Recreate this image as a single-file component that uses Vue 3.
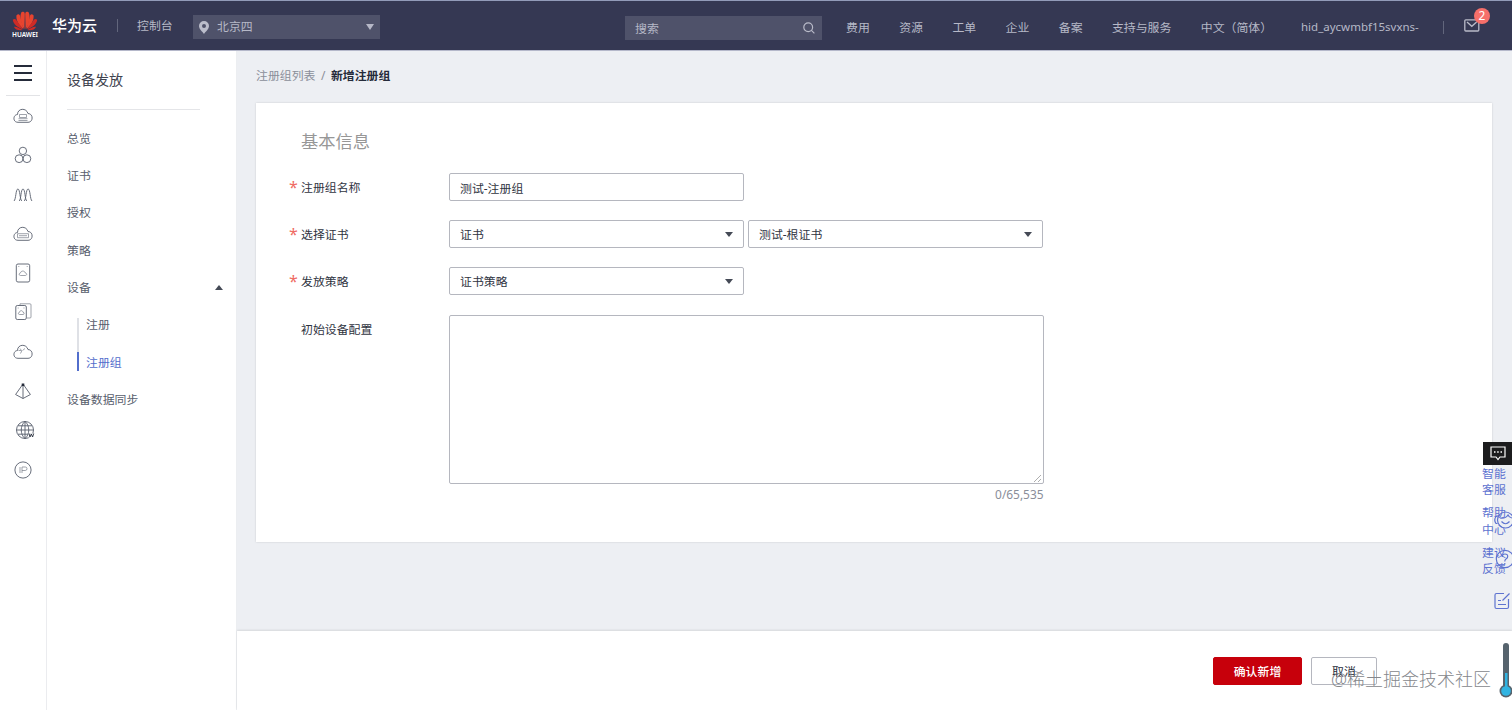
<template>
  <div class="page">
    <header class="header">
      <div class="logo">
        <svg width="26" height="20" viewBox="0 0 26 20">
          <g fill="#e8442f">
            <path d="M12.400 18C8.600 13 7.300 5.200 9.400 1.200 12 .2 12.800 1 12.800 3.500z" />
            <path d="M13.600 18C17.400 13 18.700 5.200 16.600 1.200 14 .2 13.200 1 13.200 3.500z" />
            <path d="M11.600 18C7 14.500 3.700 9 4.500 4.200 6.600 2.200 8 3.400 8.300 6z" />
            <path d="M14.400 18C19 14.500 22.300 9 21.500 4.200 19.400 2.200 18 3.400 17.700 6z" />
          </g>
          <g fill="#cf2b26">
            <path d="M11 18.300C6 17 1.400 13.300.8 8.800 2.500 7.200 4 8.200 5 10z" />
            <path d="M15 18.300C20 17 24.600 13.300 25.200 8.800 23.500 7.200 22 8.200 21 10z" />
            <path d="M10.700 19C7 19.800 3.200 19 1.900 15.800 4 15 8 17.500 10.700 19z" />
            <path d="M15.300 19C19 19.800 22.800 19 24.100 15.800 22 15 18 17.500 15.300 19z" />
          </g>
        </svg>
        <span>HUAWEI</span>
      </div>
      <strong class="brand">华为云</strong>
      <i class="divider"></i>
      <a class="console">控制台</a>
      <div class="region">
        <svg width="10" height="13" viewBox="0 0 10 13">
          <path fill="#bbbdcb" fill-rule="evenodd" d="M5 0a5 5 0 0 1 5 5c0 3-3.300 5.500-5 8-1.700-2.500-5-5-5-8a5 5 0 0 1 5-5zm0 3a2 2 0 1 0 0 4 2 2 0 0 0 0-4z" />
        </svg>
        <span>北京四</span>
        <i class="caret"></i>
      </div>
      <div class="search">
        <span>搜索</span>
        <svg width="12" height="12" viewBox="0 0 12 12" fill="none" stroke="#b9bbc9" stroke-width="1.200">
          <circle cx="5.200" cy="5.200" r="4.400" />
          <path d="M8.400 8.400l3 3" />
        </svg>
      </div>
      <nav class="top-nav">
        <a v-for="item in topNav" :key="item">{{ item }}</a>
      </nav>
      <span class="user">hid_aycwmbf15svxns-</span>
      <i class="divider mail-divider"></i>
      <div class="mail">
        <svg width="16" height="13" viewBox="0 0 16 13" fill="none" stroke="#b9bbc9" stroke-width="1.300">
          <rect x=".8" y=".8" width="14" height="11.200" rx="1" />
          <path d="M3 3l4.800 4.300L12.600 3" />
        </svg>
        <span class="badge">2</span>
      </div>
    </header>

    <div class="body">
      <aside class="rail">
        <div class="burger"><i></i><i></i><i></i></div>
        <div class="rail-icons">
          <svg v-for="(icon, i) in railIcons" :key="i" :class="{ shifted: i === 8 }" width="20" height="20" viewBox="0 0 20 20">
            <path v-for="(p, j) in icon" :key="j" :d="p.d" :class="p.c" />
          </svg>
        </div>
      </aside>

      <aside class="sidebar">
        <h2>设备发放</h2>
        <ul class="menu">
          <li v-for="item in menu" :key="item">{{ item }}</li>
          <li class="parent">设备<i class="caret up"></i></li>
          <li class="sub">注册</li>
          <li class="sub active">注册组</li>
          <li>设备数据同步</li>
        </ul>
      </aside>

      <main class="main">
        <div class="content">
          <div class="breadcrumb">
            <a>注册组列表</a><span class="slash">/</span><b>新增注册组</b>
          </div>
          <section class="card">
            <h3>基本信息</h3>
            <div class="row">
              <label class="required">注册组名称</label>
              <input v-model="form.name" class="control" type="text" />
            </div>
            <div class="row">
              <label class="required">选择证书</label>
              <div class="control select">{{ form.type }}<i class="caret"></i></div>
              <div class="control select second">{{ form.cert }}<i class="caret"></i></div>
            </div>
            <div class="row">
              <label class="required">发放策略</label>
              <div class="control select">{{ form.policy }}<i class="caret"></i></div>
            </div>
            <div class="row">
              <label>初始设备配置</label>
              <div class="config">
                <textarea v-model="form.config"></textarea>
                <svg class="grip" width="9" height="9" viewBox="0 0 9 9" stroke="#999" stroke-width=".8"><path d="M1 8l7-7M5 8l3-3" /></svg>
                <div class="count">{{ form.config.length }}/65,535</div>
              </div>
            </div>
          </section>
        </div>
        <footer class="footer">
          <button class="btn primary">确认新增</button>
          <button class="btn">取消</button>
        </footer>
      </main>
    </div>

    <div class="helper">
      <div class="chat">
        <svg width="16" height="15" viewBox="0 0 16 15" fill="none" stroke="#fff" stroke-width="1.200">
          <path d="M1 1h14v10H10l-2 2.500L6 11H1z" />
          <path d="M4 6h1.500M7.200 6h1.500M10.500 6H12" stroke-width="1.600" />
        </svg>
      </div>
      <p v-for="tip in helpTips" :key="tip[0]">{{ tip[0] }}<br />{{ tip[1] }}</p>
      <svg class="helper-icons" width="20" height="104" viewBox="0 0 20 104" fill="none" stroke="#5e73d0" stroke-width="1.200">
        <circle cx="13.500" cy="13" r="8" />
        <path d="M8 11q5.500 1 8-3 1 2.500 4 3M5.500 9.500H4q-2.500 3.500 0 7h1.500M9.500 14.500q4 4.500 8 0" />
        <circle cx="13" cy="52" r="8.700" />
        <path d="M10.200 50q0-3 2.800-3t2.700 2.600q0 1.500-1.700 2.500-1.200.8-1.200 2.400M12.800 56v1.500" />
        <path d="M12 86.500H4.500q-1.500 0-1.500 1.500v12q0 1.500 1.500 1.500H15q1.500 0 1.500-1.500V92M6 97.500h8M6 93.500h3M10.500 93.500l7-7" />
      </svg>
    </div>
    <div class="watermark">@稀土掘金技术社区</div>
    <svg class="thermo" width="14" height="58" viewBox="0 0 14 58">
      <rect x="4" y="1" width="6" height="50" rx="3" fill="#56636d" />
      <circle cx="7" cy="49" r="6.500" fill="#56636d" />
      <rect x="6" y="31" width="2.500" height="18" fill="#31b4e2" />
      <circle cx="7" cy="49" r="4.800" fill="#31b4e2" />
    </svg>
  </div>
</template>

<script setup>
import { reactive } from 'vue';

const topNav = ['费用', '资源', '工单', '企业', '备案', '支持与服务', '中文（简体）'];
const menu = ['总览', '证书', '授权', '策略'];
const helpTips = [['智能', '客服'], ['帮助', '中心'], ['建议', '反馈']];

const form = reactive({
  name: '测试-注册组',
  type: '证书',
  cert: '测试-根证书',
  policy: '证书策略',
  config: ''
});

const cloud = 'M5 16.300C-.5 16.300-.2 8.800 4.500 8.500 4.500 2 13.500 1.500 15 7.600 20.500 7.500 20.500 16.300 15 16.300z';

const railIcons = [
  [{ d: cloud }, { d: 'M6.500 8.500h7v3h-7zM5.500 12.700h9M5.500 14.500h9', c: 'thin' }],
  [{ d: 'M6.200 5.900a3.700 3.700 0 1 1 7.400 0a3.700 3.700 0 1 1-7.400 0M2.200 13.700a3.900 3.900 0 1 1 7.800 0a3.900 3.900 0 1 1-7.800 0M10 13.700a3.900 3.900 0 1 1 7.800 0a3.900 3.900 0 1 1-7.800 0' }],
  [{ d: 'M1 16C3 14.500 2.700 4 4.900 4S6.800 14.500 8.800 16M6.200 16C8.200 14.500 7.800 4 10 4S11.800 14.500 13.800 16M11.200 16C13.200 14.500 12.900 4 15.100 4S17 14.500 19 16' }],
  [{ d: cloud }, { d: 'M4.500 9.700h11v4h-11zM6 11.700h8', c: 'thin' }],
  [{ d: 'M5 1h10q1.700 0 1.700 1.700v14.600Q16.700 19 15 19H5q-1.700 0-1.700-1.700V2.700Q3.300 1 5 1z' }, { d: 'M7.500 12.500c-1.800 0-1.800-2.500 0-2.500.2-2.600 4.500-2.600 4.700 0 2 0 2 2.500 0 2.500zM5.300 3.500h1M13.700 3.500h1', c: 'thin' }],
  [{ d: 'M4.300 3.500h7.500q1.500 0 1.500 1.500v11q0 1.500-1.500 1.500H4.300Q2.800 17.500 2.800 16V5q0-1.500 1.500-1.500z' }, { d: 'M6.500 12.500c-1.500 0-1.500-2.200 0-2.200.2-2.200 3.300-2.200 3.500 0 1.500 0 1.500 2.200 0 2.200zM7 3V1.800h10q1 0 1 1V15q0 1-1 1h-3M4.700 6h1M10.500 6h1', c: 'thin' }],
  [{ d: cloud }, { d: 'M7.500 11.500l1.200-2.500M5.500 8.500h3L7 6.500M9.500 8.500l2.500-2', c: 'thin' }],
  [{ d: 'M10 3L2.600 13.500 10 17.500 17.400 13.500zM10 3V17.500' }, { d: 'M8.700 2.500h2.600v2.600H8.700z', c: 'solid' }],
  [{ d: 'M1.500 10a8.500 8.500 0 1 1 17 0a8.500 8.500 0 1 1-17 0M10 1.500v17M1.500 10h17M3 5.800h14M3 14.200h14M10 1.500c-5 4-5 13 0 17M10 1.500c5 4 5 13 0 17' }, { d: 'M13.500 13.500h6v4h-6z', c: 'blank' }, { d: 'M14 13.500l1 3.500 1.300-3 1.300 3 1.100-3.500', c: 'bold' }],
  [{ d: 'M1.900 10a8.100 8.100 0 1 1 16.200 0a8.100 8.100 0 1 1-16.200 0' }, { d: 'M7 7v6M9 13V7h3.300q1.700 0 1.700 1.700T12.300 10.500H9', c: 'thin' }]
];
</script>

<style>
body {
  margin: 0;
  overflow: hidden;
}
</style>

<style scoped>
.page {
  height: 710px;
  position: relative;
  overflow: hidden;
  display: flex;
  flex-direction: column;
  font-family: "Noto Sans", "Noto Sans CJK SC", sans-serif;
  font-size: 11.900px;
  line-height: 18px;
  color: #4d5162;
  background: #fff;
}

.page * {
  box-sizing: border-box;
}

.header {
  height: 51px;
  flex: none;
  display: flex;
  align-items: center;
  background: #353853;
  border-top: 1px solid #929bb9;
  border-bottom: 1px solid #b5b8ca;
  color: #b6b8c7;
  white-space: nowrap;
}

.logo {
  width: 28px;
  margin-left: 11px;
  display: flex;
  flex-direction: column;
  align-items: center;
}

.logo svg {
  margin-top: -1px;
}

.logo span {
  color: #fff;
  font-size: 6.500px;
  line-height: 8px;
  font-weight: 600;
}

.brand {
  width: 45px;
  margin-left: 13px;
  margin-top: -2px;
  font-size: 15px;
  font-weight: 500;
  color: #fff;
}

.divider {
  width: 1px;
  height: 13px;
  margin-left: 20px;
  background: #62667c;
}

.console {
  width: 36px;
  margin-left: 19px;
  margin-top: -1px;
}

.region {
  width: 187px;
  height: 24px;
  margin: 3px 0 0 20px;
  padding: 0 6px;
  display: flex;
  align-items: center;
  background: #4f526a;
}

.region span {
  flex: 1;
  margin: -2px 0 0 8px;
}

.caret {
  border: 4.5px solid transparent;
  border-top: 5px solid #454a56;
  border-bottom: 0;
}

.region .caret {
  border-top: 6px solid #b6b8c7;
}

.caret.up {
  border: 4px solid transparent;
  border-bottom: 5px solid #454a56;
  border-top: 0;
}

.search {
  width: 197px;
  height: 24px;
  margin: 5px 0 0 245px;
  padding: 0 7px 0 10px;
  display: flex;
  align-items: center;
  justify-content: space-between;
  background: #4f526a;
}

.top-nav {
  display: flex;
  gap: 29.400px;
  width: 427px;
  margin: 2px 0 0 24px;
}

.user {
  width: 118px;
  margin: 2px 0 0 28px;
  font-size: 11.500px;
}

.mail-divider {
  margin-left: 24px;
  margin-top: 3px;
}

.mail {
  position: relative;
  display: flex;
  margin: 0 0 0 20px;
}

.badge {
  position: absolute;
  left: 10px;
  top: -11px;
  width: 16px;
  height: 16px;
  border-radius: 50%;
  background: #f66f6a;
  color: #fff;
  line-height: 15px;
  text-align: center;
}

.body {
  flex: 1;
  display: flex;
  min-height: 0;
}

.rail {
  width: 47px;
  flex: none;
  border-right: 1px solid #ebecef;
}

.burger {
  width: 34px;
  height: 45px;
  margin-left: 6px;
  padding: 14px 8px 0;
  border-bottom: 1px solid #e2e3e6;
}

.burger i {
  display: block;
  height: 2px;
  margin-bottom: 5px;
  background: #252b3a;
}

.rail-icons {
  display: flex;
  flex-direction: column;
  gap: 19.300px;
  padding: 10px 0 0 12.700px;
}

.rail-icons svg {
  fill: none;
  stroke: #575d6c;
  stroke-width: 0.900;
}

.rail-icons .shifted {
  margin-left: 2px;
}

.rail-icons .thin {
  stroke-width: 0.7;
  stroke: #777c88;
}

.rail-icons .solid {
  fill: #252b3a;
  stroke: none;
}

.rail-icons .blank {
  fill: #fff;
  stroke: none;
}

.rail-icons .bold {
  stroke: #252b3a;
}

.sidebar {
  width: 190px;
  flex: none;
  padding: 20px 0 0 20px;
  border-right: 1px solid #eceef1;
}

h2 {
  width: 133px;
  height: 39px;
  margin: 0;
  border-bottom: 1px solid #e4e5e8;
  font-size: 14px;
  line-height: 18px;
  font-weight: 400;
  color: #40444f;
}

.menu {
  margin: 0;
  padding: 9.500px 0 0;
  list-style: none;
}

.menu li {
  height: 37.350px;
  line-height: 37.350px;
  color: #575d6c;
}

.menu .parent {
  display: flex;
  align-items: center;
  justify-content: space-between;
  padding-right: 13px;
}

.menu .sub {
  margin-left: 10px;
  padding-left: 7px;
  border-left: 2px solid;
  border-image: linear-gradient(transparent 12px, #dfe1e6 12px) 1;
}

.menu .sub.active {
  color: #526ecc;
  border-image: linear-gradient(#dfe1e6 9px, #526ecc 9px, #526ecc 27px, transparent 27px) 1;
}

.main {
  flex: 1;
  min-width: 0;
  display: flex;
  flex-direction: column;
  background: #edeff3;
}

.content {
  flex: 1;
  padding: 15px 20px 0 19px;
}

.breadcrumb {
  height: 37px;
  color: #8a8e99;
}

.slash {
  margin: 0 5.500px;
}

.breadcrumb b {
  font-weight: 600;
  color: #252b3a;
}

.card {
  height: 439px;
  padding: 27px 0 0 45px;
  background: #fff;
  box-shadow: 0 0 2px rgba(0, 0, 0, 0.15);
}

h3 {
  height: 43px;
  margin: 0;
  font-size: 17.300px;
  line-height: 24px;
  font-weight: 400;
  color: #979797;
}

.row {
  display: flex;
  margin-bottom: 19.200px;
}

label {
  position: relative;
  width: 148px;
  line-height: 28px;
  height: 28px;
  color: #30343f;
}

.required::before {
  content: "*";
  position: absolute;
  left: -12px;
  top: -3px;
  line-height: 34px;
  font-size: 16px;
  color: #ef6b64;
}

.control {
  width: 295px;
  height: 28px;
  padding: 0 10px;
  border: 1px solid #b5b7bf;
  border-radius: 2px;
  background: #fff;
  font: inherit;
  color: #30343f;
}

.select {
  display: flex;
  align-items: center;
  justify-content: space-between;
}

.second {
  margin-left: 4px;
}

.config {
  position: relative;
  width: 594.500px;
}

textarea {
  display: block;
  width: 594.500px;
  height: 169px;
  border: 1px solid #b5b7bf;
  border-radius: 2px;
  resize: none;
}

.grip {
  position: absolute;
  right: 2px;
  top: 159px;
}

.count {
  margin-top: 1px;
  text-align: right;
  color: #8a8e99;
}

.footer {
  height: 79px;
  padding: 26px 135px 0 0;
  display: flex;
  justify-content: flex-end;
  gap: 9px;
  background: #fff;
  box-shadow: 0 -1px 2px rgba(0, 0, 0, 0.1);
}

.btn {
  width: 66px;
  height: 28px;
  padding: 0;
  border: 1px solid #b5b7bf;
  border-radius: 2px;
  background: #fff;
  font: inherit;
  color: #252b3a;
}

.btn.primary {
  width: 89px;
  border-color: #c7000b;
  background: #c7000b;
  color: #fff;
  font-weight: 500;
}

.helper {
  position: absolute;
  right: 0;
  top: 442px;
  width: 30px;
  color: #5e73d0;
  line-height: 16.500px;
}

.chat {
  height: 23px;
  margin-left: 1px;
  display: flex;
  align-items: center;
  justify-content: center;
  background: #1c1c1e;
}

.helper p {
  margin: 0 0 6.500px;
  position: relative;
  top: -0.5px;
}

.helper-icons {
  position: absolute;
  left: 10px;
  top: 65px;
}

.watermark {
  position: absolute;
  left: 1331px;
  top: 666px;
  font-size: 18px;
  line-height: 26px;
  font-weight: 300;
  color: #85878c;
  white-space: nowrap;
}

.thermo {
  position: absolute;
  right: -1px;
  top: 642px;
}
</style>
